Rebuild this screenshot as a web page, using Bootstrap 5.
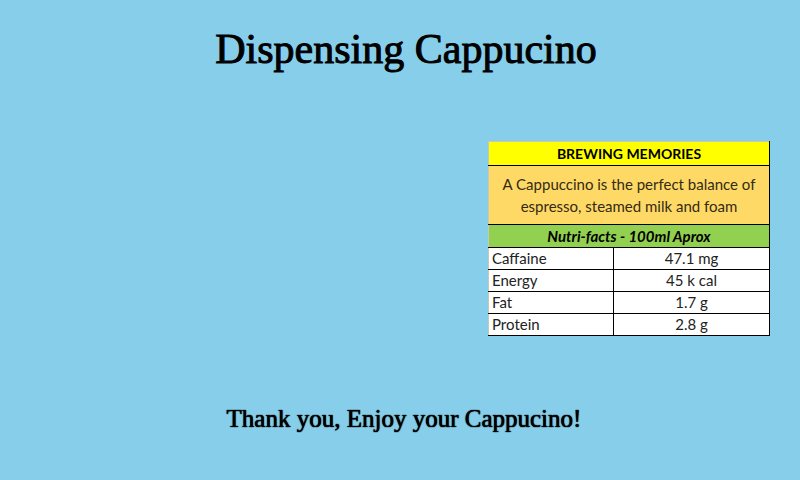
<!DOCTYPE html>
<html lang="en">
<head>
<meta charset="utf-8">
<meta name="viewport" content="width=device-width, initial-scale=1">
<title>Dispensing Cappucino</title>
<link href="https://cdn.jsdelivr.net/npm/bootstrap@5.3.0/dist/css/bootstrap.min.css" rel="stylesheet">
<style>
body { background: #87ceeb; color: #000; }
.screen { padding: 25px 0 45px; }
.serif { font-family: "Liberation Serif", "Times New Roman", serif; }
.page-title { font-size: 42px; line-height: 48px; padding-left: 12px; -webkit-text-stroke: 1px #000; }
.thanks { font-size: 25px; line-height: 32px; text-shadow: 0 0 1px #000, 0 0 1px #000; }
.facts-row { padding-right: 30px; }
.facts { width: 282px; font-family: Lato, Carlito, sans-serif; font-size: 15px; line-height: 21px; border-collapse: collapse; background: #fff; }
.facts th, .facts td { border: 1px solid #000; padding: 0 3px; }
.facts .brand { background: #ff0; font-size: 14px; line-height: 23px; border-top-color: #c8c8b4; }
.facts .blurb { background: #ffd966; padding: 7px 12px; line-height: 22px; color: #332b14; }
.facts .nutri { background: #92d050; font-style: italic; line-height: 22px; }
.facts .label-cell { width: 125px; font-weight: 400; }
.facts tbody { color: #222; }
.facts .brand, .facts .blurb, .facts .nutri, .facts .label-cell { border-left-color: #c8c8b4; }
</style>
</head>
<body>
<main class="screen d-flex flex-column min-vh-100">
  <h1 class="serif page-title fw-normal text-center mb-0">Dispensing Cappucino</h1>
  <div class="facts-row d-flex justify-content-end my-auto">
    <table class="facts">
      <thead class="text-center">
        <tr><th class="brand" colspan="2">BREWING MEMORIES</th></tr>
        <tr><td class="blurb" colspan="2">A Cappuccino is the perfect balance of espresso, steamed milk and foam</td></tr>
        <tr><th class="nutri" colspan="2">Nutri-facts - 100ml Aprox</th></tr>
      </thead>
      <tbody>
        <tr><th class="label-cell" scope="row">Caffaine</th><td class="text-center">47.1 mg</td></tr>
        <tr><th class="label-cell" scope="row">Energy</th><td class="text-center">45 k cal</td></tr>
        <tr><th class="label-cell" scope="row">Fat</th><td class="text-center">1.7 g</td></tr>
        <tr><th class="label-cell" scope="row">Protein</th><td class="text-center">2.8 g</td></tr>
      </tbody>
    </table>
  </div>
  <p class="serif thanks text-center mb-0 ps-2">Thank you, Enjoy your Cappucino!</p>
</main>
<script src="https://cdn.jsdelivr.net/npm/bootstrap@5.3.0/dist/js/bootstrap.bundle.min.js"></script>
</body>
</html>
